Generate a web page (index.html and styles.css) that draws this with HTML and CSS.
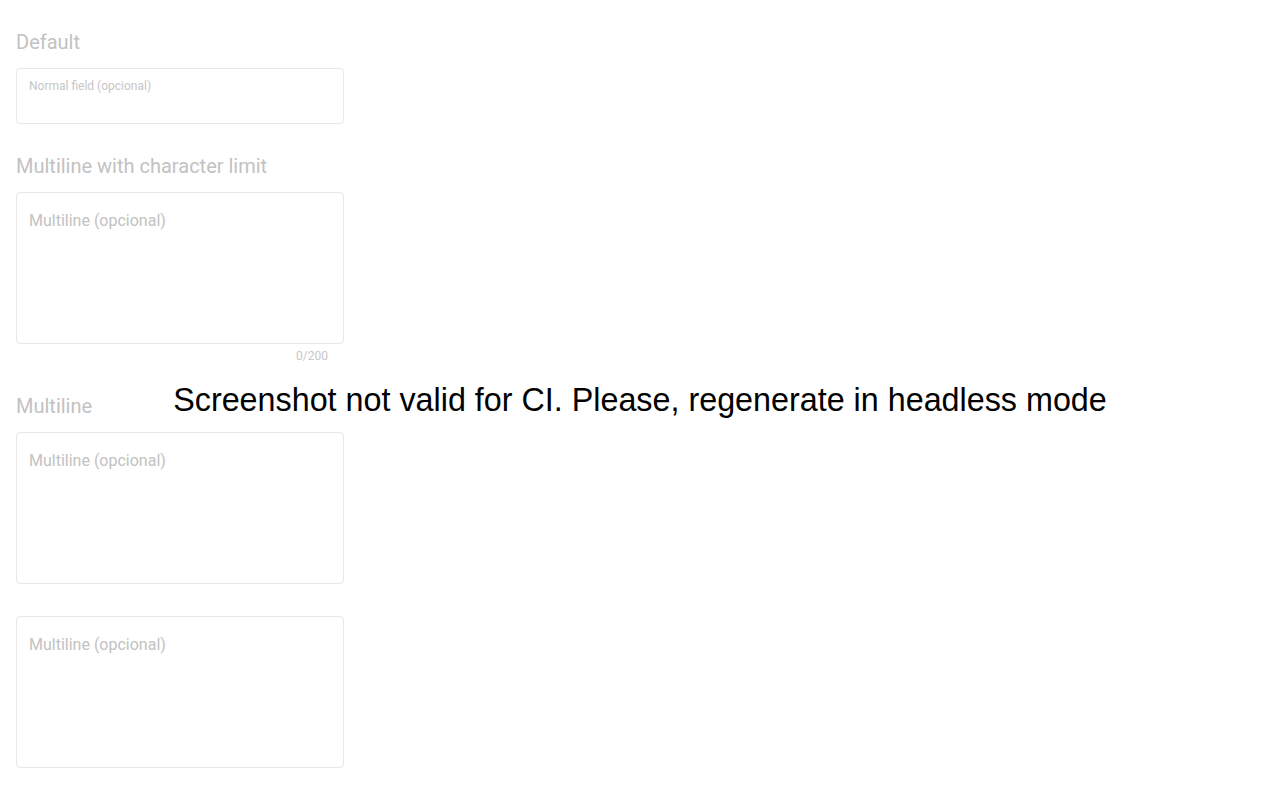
FILE: index.html
```html
<!DOCTYPE html>
<html>
<head>
<meta charset="utf-8">
<link rel="stylesheet" href="styles.css">
</head>
<body>
<main class="page">
  <section class="group">
    <h2 class="title">Default</h2>
    <div class="field field-short">
      <span class="label-small">Normal field (opcional)</span>
    </div>
  </section>
  <section class="group">
    <h2 class="title">Multiline with character limit</h2>
    <div class="field field-multi">
      <span class="placeholder">Multiline (opcional)</span>
    </div>
    <div class="counter">0/200</div>
  </section>
  <section class="group">
    <h2 class="title">Multiline</h2>
    <div class="field field-multi">
      <span class="placeholder">Multiline (opcional)</span>
    </div>
  </section>
  <section class="group group-plain">
    <div class="field field-multi">
      <span class="placeholder">Multiline (opcional)</span>
    </div>
  </section>
</main>
<div class="ci-warning">Screenshot not valid for CI. Please, regenerate in headless mode</div>
</body>
</html>
```
FILE: styles.css
```css
* { box-sizing: border-box; }
html, body { margin: 0; padding: 0; background: #fff; }
body { font-family: Roboto, "Noto Sans", sans-serif; width: 1280px; height: 800px; overflow: hidden; position: relative; }
.page { padding: 28px 16px 0 16px; display: flex; flex-direction: column; }
.group { display: flex; flex-direction: column; width: 328px; margin-bottom: 28px; }
.group-plain { margin-top: 4px; }
.title { margin: 0 0 12px 0; font-size: 20px; line-height: 28px; font-weight: 400; color: #c2c2c2; }
.field { border: 1px solid #e8e8e8; border-radius: 4px; padding: 0 12px; background: #fff; }
.field-short { height: 56px; padding-top: 9px; }
.field-multi { height: 152px; padding-top: 16px; }
.label-small { display: block; font-size: 12px; line-height: 16px; color: #c6c6c6; }
.placeholder { display: block; font-size: 16px; line-height: 24px; color: #c2c2c2; }
.counter { text-align: right; padding: 4px 16px 0 0; font-size: 12px; line-height: 16px; color: #c8c8c8; }
.ci-warning { position: absolute; left: 0; right: 0; top: 380px; text-align: center; font-family: "Liberation Sans", Arial, sans-serif; font-size: 32.3px; line-height: 40px; color: #000; }
```
